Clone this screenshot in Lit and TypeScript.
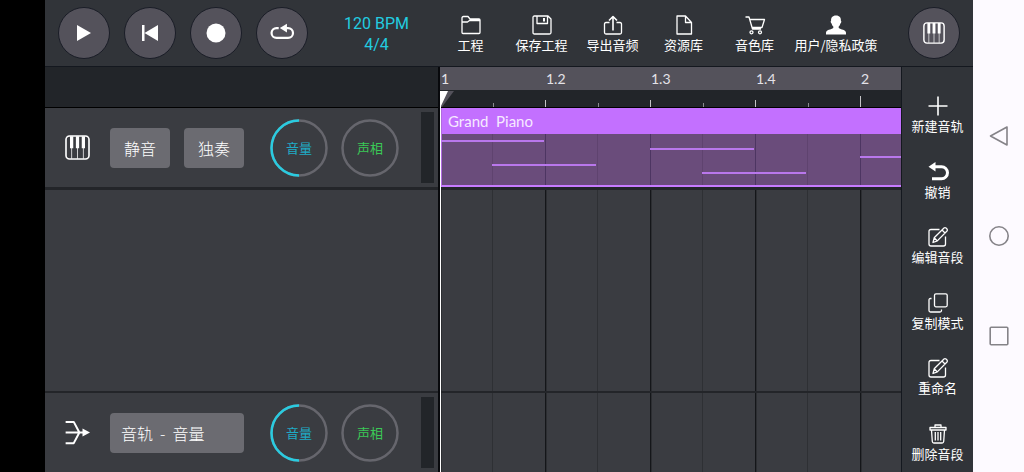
import { LitElement, html, css, svg, nothing } from "lit";
import { customElement, property, state } from "lit/decorators.js";
import { classMap } from "lit/directives/class-map.js";
import { styleMap } from "lit/directives/style-map.js";

const BEAT = 105;

const glyphs: Record<string, unknown> = {
  play: svg`<path d="M3 2v16l14-8z" fill="currentColor" stroke="none"/>`,
  rewind: svg`<path d="M2 2h2.500v16H2zM18 2v16L4.500 10z" fill="currentColor" stroke="none"/>`,
  record: svg`<circle cx="10" cy="10" r="9.500" fill="currentColor" stroke="none"/>`,
  loop: svg`<path d="M7 5.500H5a4.500 4.500 0 0 0 0 9h10.500a4.500 4.500 0 0 0 0-9H13" stroke-width="2"/><path d="M14.500 1.500v8L8 5.500z" fill="currentColor" stroke="none"/>`,
  folder: svg`<path d="M1 17.500V3q0-1.500 1.500-1.500h4.500l2 2.500h9q1 0 1 1v12.500q0 1-1 1H2q-1 0-1-1zM1 7h5.500l2-1.500H19"/>`,
  save: svg`<path d="M1 17.500v-15q0-1.500 1.500-1.500H16l3 3v13.500q0 1.500-1.500 1.500h-15q-1.500 0-1.500-1.500zM5 1v7.500h10.500V1"/><path d="M12 3v3.500" stroke-width="2"/>`,
  share: svg`<path d="M6.500 7.500H3q-1.500 0-1.500 1.500v8.500Q1.500 19 3 19h14q1.500 0 1.500-1.500V9q0-1.500-1.500-1.500h-3.500"/><path d="M10 15.500V2M6 5.500l4-4 4 4" stroke-width="1.600"/>`,
  file: svg`<path d="M3 1h8.500L17.500 7.500V19H3zM11.500 1v6.500h6"/>`,
  cart: svg`<path d="M.5 2H4l3.500 12H16M4.800 4.500h14.700L17 12.500H7"/><circle cx="6.500" cy="17.300" r="1.500"/><circle cx="15" cy="17.300" r="1.500"/>`,
  user: svg`<path d="M10 .5c3.600 0 5.200 2.300 4.900 5.300.8.400.4 2.300-.5 2.700-.4 1.700-1 2.400-1.700 3v1.600c2 1.500 7.300 1.800 7.300 4.700V19.500H0v-1.700c0-2.900 5.300-3.200 7.300-4.700v-1.600c-.7-.6-1.300-1.300-1.700-3-.9-.4-1.300-2.300-.5-2.700C4.800 2.800 6.400.5 10 .5z" fill="currentColor" stroke="none"/>`,
  plus: svg`<path d="M10 .5v19M.5 10h19" stroke-width="1.600"/>`,
  undo: svg`<path d="M4 4.800h9.500a5.500 5.500 0 0 1 0 12H4" stroke-width="3"/><path d="M7.500 0v9.600L.5 4.800z" fill="currentColor" stroke="none"/>`,
  edit: svg`<path d="M11.500 2.500H3Q1 2.500 1 4.500V17q0 2 2 2h12.500q2 0 2-2V9.500"/><path d="M5 15.500l1.200-4.700L16 1q1-.8 2 0l1 1q.8 1 0 2L9.300 13.900zM14 3l3 3M6.200 10.800l3.100 3.100"/>`,
  copy: svg`<rect x="6.500" y=".8" width="12.700" height="13" rx="1.500"/><path d="M3.500 5.500H2.500Q1 5.500 1 7v10.500Q1 19 2.500 19H12q1.500 0 1.500-1.500v-1"/>`,
  trash: svg`<path d="M2 3.500h16v2.500H2zM7 3.500V1h6v2.500M3.500 6l.8 11.500q.2 1.500 1.500 1.500h8.400q1.300 0 1.500-1.500L16.500 6M7.300 8v8.500M10 8v8.500M12.700 8v8.500"/>`,
  piano: svg`<rect x=".8" y=".8" width="18.400" height="18.400" rx="2.800"/><path d="M4 1h2.600v9.500H4zM8.700 1h2.600v9.500H8.700zM13.400 1H16v9.500h-2.600z" fill="currentColor" stroke="none"/><path d="M5.300 10v9M10 10v9M14.700 10v9" stroke-width=".6"/>`,
  route: svg`<path d="M.5 1.500h6.500l4.500 8.500-4.500 8.500H.5M.5 10H15" stroke-width="1.600"/><path d="M14 6.800v6.400l6-3.200z" fill="currentColor" stroke="none"/>`,
  navBack: svg`<path d="M18 1v18L1.500 10z"/>`,
  navHome: svg`<circle cx="10" cy="10" r="9.200"/>`,
  navRecent: svg`<rect x="1.200" y="1.200" width="17.600" height="17.600" rx="1"/>`,
};

@customElement("ui-icon")
class UiIcon extends LitElement {
  @property() name = "";
  static styles = css`
    :host { display: block; width: 20px; height: 20px; }
    .glyph { display: block; width: 100%; height: 100%; overflow: visible; fill: none; stroke: currentColor; stroke-width: 1.300; stroke-linejoin: round; }
    .nav { stroke-width: 1.600; }
  `;
  render() {
    return html`<svg class=${classMap({ glyph: true, nav: this.name.startsWith("nav") })} viewBox="0 0 20 20" aria-hidden="true">${glyphs[this.name]}</svg>`;
  }
}

@customElement("round-knob")
class RoundKnob extends LitElement {
  @property() label = "";
  @property() tone = "volume";
  @property({ type: Number }) value = 0;
  static styles = css`
    :host { display: block; width: 58px; height: 58px; }
    .knob { position: relative; display: grid; place-items: center; height: 100%; font-size: 13px; }
    .volume { color: #1fabc6; }
    .pan { color: #3bc957; }
    .ring { position: absolute; inset: 0; width: 100%; height: 100%; fill: none; stroke-width: 2.500; }
    .rail { stroke: #66666d; }
    .arc { stroke: #2acbe0; }
    .range { position: absolute; inset: 0; width: 100%; height: 100%; margin: 0; opacity: 0; }
  `;
  render() {
    return html`<label class=${classMap({ knob: true, [this.tone]: true })}>
      <svg class="ring" viewBox="0 0 58 58" aria-hidden="true">
        <circle class="rail" cx="29" cy="29" r="27.500" />
        ${this.value > 0
          ? svg`<circle class="arc" cx="29" cy="29" r="27.500" pathLength="100" stroke-dasharray="${this.value} 100" transform="rotate(90 29 29)"/>`
          : nothing}
      </svg>
      <span>${this.label}</span>
      <input class="range" type="range" min="0" max="100" .value=${String(this.value)} />
    </label>`;
  }
}

@customElement("app-root")
class AppRoot extends LitElement {
  @state() beats = 4;

  menu = [
    ["folder", "工程"],
    ["save", "保存工程"],
    ["share", "导出音频"],
    ["file", "资源库"],
    ["cart", "音色库"],
    ["user", "用户/隐私政策"],
  ];
  tools = [
    ["plus", "新建音轨"],
    ["undo", "撤销"],
    ["edit", "编辑音段"],
    ["copy", "复制模式"],
    ["edit", "重命名"],
    ["trash", "删除音段"],
  ];
  transport = [
    ["play", "播放"],
    ["rewind", "回到开头"],
    ["record", "录音"],
    ["loop", "循环"],
  ];
  notes = [
    { start: 0, row: 0 },
    { start: 0.5, row: 3 },
    { start: 2, row: 1 },
    { start: 2.5, row: 4 },
    { start: 4, row: 2 },
  ];

  static styles = css`
    :host {
      display: block;
      color: #fff;
      font-family: "Noto Sans CJK SC", "Noto Sans", sans-serif;
      font-size: 13px;
      line-height: 20px;
    }
    * { box-sizing: border-box; }
    button { margin: 0; padding: 0; border: 0; background: none; color: inherit; font: inherit; cursor: pointer; }
    .screen { display: grid; grid-template-columns: 45px minmax(0, 1fr) 51px; min-height: 100vh; background: #000; }
    .daw { grid-column: 2; display: flex; flex-direction: column; background: #3a3c41; }

    .topbar { display: flex; align-items: center; height: 67px; padding: 0 13px; background: #313439; border-bottom: 1px solid #14181f; }
    .transport { display: flex; gap: 14px; }
    .round { display: grid; place-items: center; width: 52px; height: 52px; border: 1px solid #1a1d27; border-radius: 50%; background: #54525b; }
    .i-loop { width: 22px; height: 22px; }
    .i-piano { width: 22px; height: 22px; }
    .tempo { flex: 1; margin-left: 10px; padding-top: 2px; color: #22cce0; font-family: Roboto, sans-serif; font-size: 16px; line-height: 21px; text-align: center; }
    .menu { display: flex; margin-right: 26px; padding-top: 4px; }
    .action { display: flex; flex-direction: column; align-items: center; white-space: nowrap; color: #fff; }
    .menu .action { width: 71px; }
    .menu .action:last-child { width: 92px; }

    .workspace { flex: 1; display: grid; grid-template-columns: 395px minmax(0, 1fr) 71px; }
    .mixer, .timeline { display: flex; flex-direction: column; }
    .mixer { border-right: 2px solid #08090c; }
    .corner { height: 41px; background: #222529; border-bottom: 1px solid #000; }
    .strip { display: flex; align-items: center; height: 79px; padding-left: 20px; }
    .rest { flex: 1; border: solid #232529; border-width: 3px 0 2px; }
    .badge { width: 25px; height: 25px; margin-right: 20px; }
    .controls { display: flex; justify-content: space-between; width: 134px; margin-right: 26px; }
    .chip { width: 60px; height: 40px; border-radius: 4px; background: #6b6b71; font-size: 16px; font-weight: 300; }
    .wide { flex: 1; padding-left: 11px; text-align: left; white-space: pre; }
    .knobs { display: flex; gap: 13px; margin-right: 22px; }
    .meter { width: 13px; height: 71px; background: #222529; }

    .timeline { position: relative; overflow: hidden; border-right: 1px solid #14181f; }
    .ruler { display: flex; height: 41px; background: linear-gradient(#54525b 0 23px, #222529 23px); border-bottom: 1px solid #000; }
    .beat { flex: none; width: 105px; }
    .mark { height: 23px; padding-left: 1px; font-family: Lato, sans-serif; font-size: 14px; line-height: 24px; color: #e4e2e8; }
    .ticks { display: flex; align-items: flex-end; height: 17px; }
    .tick { flex: 1; height: 4px; border-left: 1px solid #8a8b8e; }
    .major { height: 7px; border-color: #c4c4c6; }
    .bar { height: 11px; }
    .grid {
      flex: 1;
      display: flex;
      flex-direction: column;
      background:
        repeating-linear-gradient(to right, #141619 0 1px, #2c2e32 1px 2px, transparent 2px 105px),
        repeating-linear-gradient(to right, transparent 0 52px, #2e3034 52px 53px, transparent 53px 105px);
    }
    .lane { height: 79px; }
    .clip { height: 79px; border-bottom: 2px solid #c77bff; border-left: 2px solid #b06be0; background: #6a4c7b; }
    .title { height: 26px; padding-left: 6px; background: #c370ff; font-family: Lato, sans-serif; font-size: 15px; line-height: 26px; color: #f6e9ff; white-space: pre; }
    .roll {
      position: relative;
      height: 51px;
      margin-left: -2px;
      background:
        repeating-linear-gradient(to right, #4d3562 0 1px, transparent 1px 105px),
        repeating-linear-gradient(to right, transparent 0 52px, #5f436f 52px 53px, transparent 53px 105px);
    }
    .note { position: absolute; height: 2px; background: #b977ec; }
    .playhead { position: absolute; top: 24px; bottom: 0; left: 0; width: 14px; pointer-events: none; border-left: 1px solid #fff; }
    .flag { display: block; width: 13px; height: 16px; }

    .tools { display: flex; flex-direction: column; justify-content: space-between; gap: 8px; padding: 29px 0 8px; background: #313439; }

    .sysnav { grid-column: 3; display: flex; flex-direction: column; align-items: center; justify-content: center; gap: 80px; background: #fdfaff; color: #858388; }
  `;

  firstUpdated() {
    const timeline = this.renderRoot.querySelector(".timeline")!;
    const fit = () => {
      this.beats = Math.max(1, Math.floor((timeline.clientWidth - 20) / BEAT) + 1);
    };
    new ResizeObserver(fit).observe(timeline);
    fit();
  }

  action([icon, label]: string[]) {
    return html`<button class="action"><ui-icon name=${icon}></ui-icon><span>${label}</span></button>`;
  }

  knobs() {
    return html`<div class="knobs">
        <round-knob label="音量" tone="volume" .value=${50}></round-knob>
        <round-knob label="声相" tone="pan" .value=${0}></round-knob>
      </div>
      <div class="meter"></div>`;
  }

  beat(i: number) {
    const bar = Math.floor(i / 4) + 1;
    const step = (i % 4) + 1;
    return html`<div class="beat">
      <div class="mark">${step === 1 ? bar : `${bar}.${step}`}</div>
      <div class="ticks">
        <span class=${classMap({ tick: true, major: true, bar: step === 1 })}></span>
        <span class="tick"></span>
      </div>
    </div>`;
  }

  render() {
    return html`<div class="screen">
      <main class="daw">
        <header class="topbar">
          <div class="transport">
            ${this.transport.map(
              ([icon, label]) => html`<button class="round" aria-label=${label}><ui-icon class="i-${icon}" name=${icon}></ui-icon></button>`
            )}
          </div>
          <button class="tempo">120 BPM<br />4/4</button>
          <nav class="menu">${this.menu.map((m) => this.action(m))}</nav>
          <button class="round" aria-label="键盘"><ui-icon class="i-piano" name="piano"></ui-icon></button>
        </header>
        <div class="workspace">
          <section class="mixer">
            <div class="corner"></div>
            <div class="strip">
              <ui-icon class="badge" name="piano"></ui-icon>
              <div class="controls">
                <button class="chip">静音</button>
                <button class="chip">独奏</button>
              </div>
              ${this.knobs()}
            </div>
            <div class="rest"></div>
            <div class="strip">
              <ui-icon class="badge" name="route"></ui-icon>
              <div class="controls"><button class="chip wide">音轨  -  音量</button></div>
              ${this.knobs()}
            </div>
          </section>
          <section class="timeline">
            <div class="ruler">${Array.from({ length: this.beats }, (_, i) => this.beat(i))}</div>
            <div class="grid">
              <div class="clip">
                <div class="title">Grand  Piano</div>
                <div class="roll">
                  ${this.notes.map(
                    (n) => html`<span
                      class="note"
                      style=${styleMap({ left: `${Math.floor(n.start * BEAT)}px`, top: `${6 + n.row * 8}px`, width: `${BEAT - 1}px` })}
                    ></span>`
                  )}
                </div>
              </div>
              <div class="rest"></div>
              <div class="lane"></div>
            </div>
            <div class="playhead">
              <svg class="flag" viewBox="0 0 13 16" aria-hidden="true">
                <path d="M0 0h13L1 16H0z" fill="#54525b" />
                <path d="M0 0h7L0 15z" fill="#fff" />
              </svg>
            </div>
          </section>
          <aside class="tools">${this.tools.map((t) => this.action(t))}</aside>
        </div>
      </main>
      <nav class="sysnav">
        <button aria-label="返回"><ui-icon name="navBack"></ui-icon></button>
        <button aria-label="主页"><ui-icon name="navHome"></ui-icon></button>
        <button aria-label="最近"><ui-icon name="navRecent"></ui-icon></button>
      </nav>
    </div>`;
  }
}
